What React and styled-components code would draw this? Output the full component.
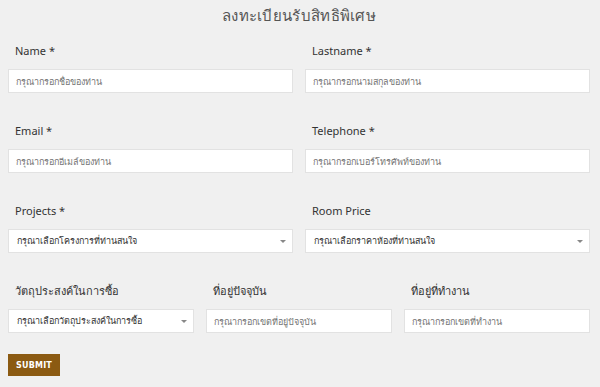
import React from 'react'
import styled, { createGlobalStyle } from 'styled-components'

const GlobalStyle = createGlobalStyle`
  body {
    margin: 0;
    background: #f0f0f0;
    font-family: "Noto Sans", "DejaVu Sans", sans-serif;
    color: #333;
  }
`;

const Page = styled.div`
  padding: 4px 10px 0 8px;
`;

const Title = styled.h2`
  margin: 0 0 15px;
  text-align: center;
  font-size: 15px;
  font-weight: 400;
  color: #555;
  letter-spacing: 0.3px;
`;

const Row = styled.div`
  display: grid;
  grid-template-columns: repeat(${p => p.cols}, 1fr);
  column-gap: 12px;
  margin-bottom: 30px;
`;

const Field = styled.div`
  display: flex;
  flex-direction: column;
`;

const Label = styled.label`
  font-size: 11px;
  color: #333;
  padding-left: 7px;
  margin-bottom: 10px;
  line-height: 16px;
`;

const Input = styled.input`
  height: 24px;
  box-sizing: border-box;
  border: 1px solid #e2e2e2;
  background: #fff;
  padding: 0 7px;
  font-family: inherit;
  font-size: 9px;
  color: #333;
  ::placeholder {
    color: #7a7a7a;
  }
  :focus {
    outline: none;
  }
`;

const SelectBox = styled.div`
  height: 24px;
  box-sizing: border-box;
  border: 1px solid #e2e2e2;
  background: #fff;
  padding: 0 6px 0 8px;
  display: flex;
  align-items: center;
  justify-content: space-between;
  font-size: 9px;
  color: #333;
`;

const Caret = styled.span`
  width: 0;
  height: 0;
  border-left: 3px solid transparent;
  border-right: 3px solid transparent;
  border-top: 3px solid #888;
`;

const SubmitBtn = styled.button`
  display: block;
  margin-top: -9px;
  background: #8b5a12;
  border: none;
  color: #fff;
  font-family: "DejaVu Sans", sans-serif;
  font-weight: 700;
  font-size: 8px;
  padding: 0;
  height: 22px;
  width: 52px;
  letter-spacing: 0.2px;
`;

const Select = ({ text }) => (
  <SelectBox>
    <span>{text}</span>
    <Caret />
  </SelectBox>
)

const App = () => {
  return (
    <Page>
      <GlobalStyle />
      <Title>ลงทะเบียนรับสิทธิพิเศษ</Title>
      <Row cols={2}>
        <Field>
          <Label>Name *</Label>
          <Input placeholder="กรุณากรอกชื่อของท่าน" />
        </Field>
        <Field>
          <Label>Lastname *</Label>
          <Input placeholder="กรุณากรอกนามสกุลของท่าน" />
        </Field>
      </Row>
      <Row cols={2}>
        <Field>
          <Label>Email *</Label>
          <Input placeholder="กรุณากรอกอีเมล์ของท่าน" />
        </Field>
        <Field>
          <Label>Telephone *</Label>
          <Input placeholder="กรุณากรอกเบอร์โทรศัพท์ของท่าน" />
        </Field>
      </Row>
      <Row cols={2}>
        <Field>
          <Label>Projects *</Label>
          <Select text="กรุณาเลือกโครงการที่ท่านสนใจ" />
        </Field>
        <Field>
          <Label>Room Price</Label>
          <Select text="กรุณาเลือกราคาห้องที่ท่านสนใจ" />
        </Field>
      </Row>
      <Row cols={3}>
        <Field>
          <Label>วัตถุประสงค์ในการซื้อ</Label>
          <Select text="กรุณาเลือกวัตถุประสงค์ในการซื้อ" />
        </Field>
        <Field>
          <Label>ที่อยู่ปัจจุบัน</Label>
          <Input placeholder="กรุณากรอกเขตที่อยู่ปัจจุบัน" />
        </Field>
        <Field>
          <Label>ที่อยู่ที่ทำงาน</Label>
          <Input placeholder="กรุณากรอกเขตที่ทำงาน" />
        </Field>
      </Row>
      <SubmitBtn type="submit">SUBMIT</SubmitBtn>
    </Page>
  )
}

export default App
